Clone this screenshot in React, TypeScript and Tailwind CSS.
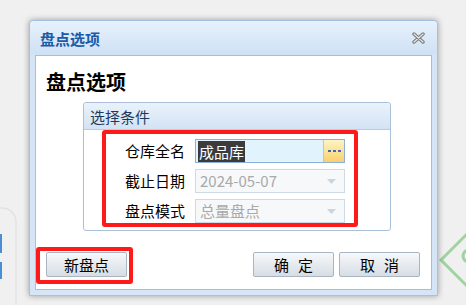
import React from 'react'

function CloseIcon() {
  return (
    <svg width="13" height="12" viewBox="0 0 13 12">
      <path d="M2 2 L11 10 M11 2 L2 10" stroke="#7d7d7d" strokeWidth="3.4" strokeLinecap="round" />
      <path d="M2 2 L11 10 M11 2 L2 10" stroke="#e6e6e6" strokeWidth="1.2" strokeLinecap="round" />
    </svg>
  )
}

function Arrow() {
  return (
    <svg width="9" height="5" viewBox="0 0 9 5">
      <path d="M0 0 L9 0 L4.5 5 Z" fill="#c9d4de" />
    </svg>
  )
}

function Field(props: { label: string; children: React.ReactNode }) {
  return (
    <div className="flex h-[24px] items-center">
      <span className="w-[70px] text-[15px] leading-[24px] text-black">{props.label}</span>
      {props.children}
    </div>
  )
}

function Btn(props: { children: React.ReactNode }) {
  return (
    <button className="flex h-[25px] w-[81px] items-center justify-center gap-[9px] rounded-[2px] border border-[#a9b5c1] bg-gradient-to-b from-[#f7f9fb] to-[#d6dde4] text-[15px] leading-none text-black">
      {props.children}
    </button>
  )
}

export default function App() {
  return (
    <div className="relative h-[305px] w-[466px] overflow-hidden bg-[#f0f0f0] pl-[29px] pt-[20px] font-['Noto_Sans_CJK_SC','Microsoft_YaHei',sans-serif]">
      {/* stuff behind the dialog */}
      <svg className="absolute left-0 top-0" width="466" height="305">
        <rect x="-40" y="208" width="56" height="120" rx="14" fill="none" stroke="#e2e2e2" strokeWidth="1.5" />
        <rect x="-4" y="234" width="6" height="19" fill="#4a8fd6" />
        <rect x="-4" y="262" width="6" height="17" fill="#4a8fd6" />
        <polygon points="441,260 468,233 495,260 468,287" fill="none" stroke="#9fd39f" strokeWidth="3" />
        <circle cx="469" cy="256" r="6" fill="none" stroke="#9fd39f" strokeWidth="3" />
      </svg>

      <div className="relative flex h-[276px] w-[409px] flex-col rounded-t-[4px] border border-[#a5c1e2] bg-[#d6e5f6] shadow-[0_0_6px_rgba(0,0,0,0.35)]">
        <div className="flex h-[34px] items-center justify-between rounded-t-[4px] bg-gradient-to-b from-[#e6f1fc] to-[#cfe1f5] pl-[10px] pr-[12px]">
          <span className="text-[15px] font-bold leading-none text-[#1c5aa8]">盘点选项</span>
          <CloseIcon />
        </div>

        <div className="flex-1 px-[5px] pb-[5px]">
          <div className="flex h-full flex-col border border-[#9fbfe3] bg-white">
            <h1 className="pl-[10px] pt-[12px] text-[20px] font-bold leading-[28px] text-black">盘点选项</h1>

            <div className="ml-[47px] mt-[6px] flex h-[129px] w-[308px] flex-col rounded-[3px] border border-[#a9c0d8]">
              <div className="flex h-[27px] items-center rounded-t-[3px] border-b border-[#b5cbe0] bg-gradient-to-b from-[#eaf2fb] to-[#d3e3f4] pl-[6px] text-[15px] leading-none text-[#1d3a5e]">
                选择条件
              </div>
              <div className="ml-[18px] flex h-[97px] w-[256px] flex-col gap-[6px] rounded-[3px] border-4 border-[#ff1a1a] pl-[19px] pt-[5px]">
                <Field label="仓库全名">
                  <div className="flex h-[24px] w-[150px] items-center border border-[#8db0d6] bg-[#e1f4fe] pl-[2px]">
                    <span className="flex-1">
                      <span className="bg-[#3b3b3b] px-[1px] text-[15px] leading-[20px] text-white">成品库</span>
                    </span>
                    <div className="flex h-[22px] w-[21px] items-center justify-center gap-[2px] border-l border-[#e3c56b] bg-gradient-to-b from-[#fff3c4] to-[#f9d06a]">
                      <span className="h-[2px] w-[3px] bg-[#3f6cb0]" />
                      <span className="h-[2px] w-[3px] bg-[#3f6cb0]" />
                      <span className="h-[2px] w-[3px] bg-[#3f6cb0]" />
                    </div>
                  </div>
                </Field>
                <Field label="截止日期">
                  <div className="flex h-[24px] w-[150px] items-center justify-between border border-[#cdd9e4] bg-[#f6f8fa] pl-[4px] pr-[8px] text-[15px] text-[#a9a9a9]">
                    <span>2024-05-07</span>
                    <Arrow />
                  </div>
                </Field>
                <Field label="盘点模式">
                  <div className="flex h-[24px] w-[150px] items-center justify-between border border-[#cdd9e4] bg-[#f6f8fa] pl-[4px] pr-[8px] text-[15px] text-[#a9a9a9]">
                    <span>总量盘点</span>
                    <Arrow />
                  </div>
                </Field>
              </div>
            </div>

            <div className="mt-[16px] flex items-start justify-between pr-[11px]">
              <div className="rounded-[3px] border-4 border-[#ff1a1a] pb-[3px] pl-[6px] pr-[2px] pt-[1px]">
                <Btn>新盘点</Btn>
              </div>
              <div className="mt-[5px] flex gap-[5px]">
                <Btn>
                  <span>确</span>
                  <span>定</span>
                </Btn>
                <Btn>
                  <span>取</span>
                  <span>消</span>
                </Btn>
              </div>
            </div>
          </div>
        </div>
      </div>
    </div>
  )
}
